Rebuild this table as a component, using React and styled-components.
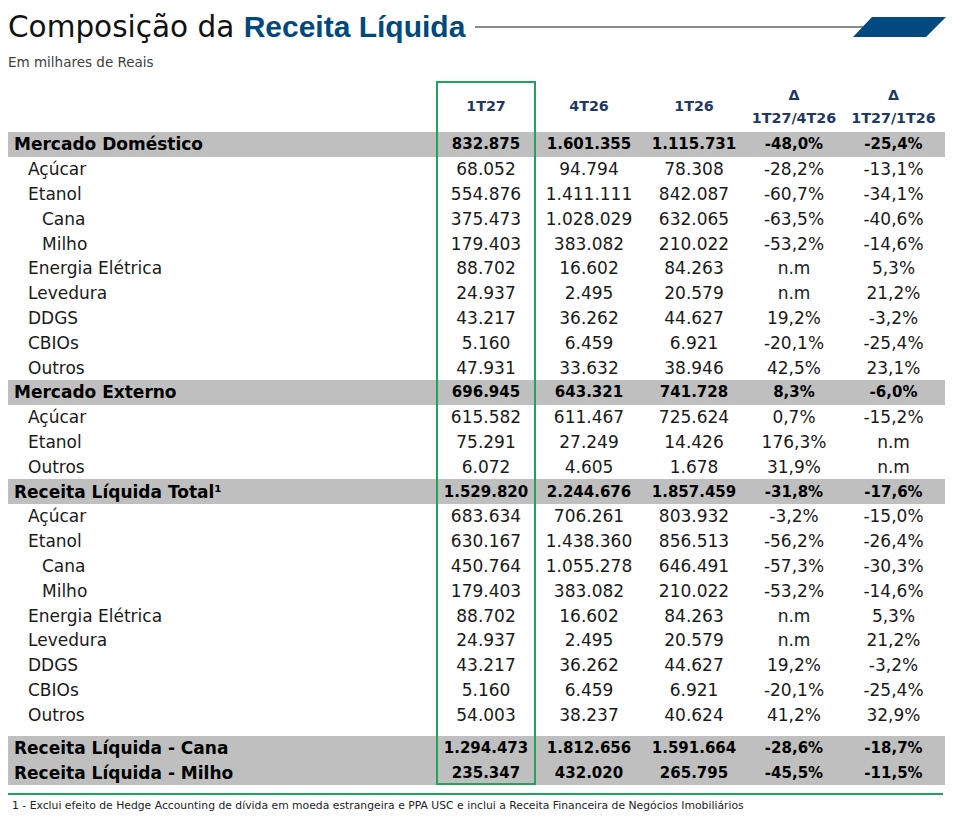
import React from 'react'
import styled, { createGlobalStyle } from 'styled-components'

const GlobalStyle = createGlobalStyle`
  body {
    margin: 0;
    background: #fff;
    font-family: "DejaVu Sans", sans-serif;
    color: #1a1a1a;
  }
`

const Page = styled.div`
  width: 955px;
  padding: 0 9px 0 8px;
  box-sizing: border-box;
`
const TitleRow = styled.div`
  display: flex;
  align-items: center;
  padding-top: 10px;
  height: 34px;
`
const Title = styled.h1`
  margin: 0;
  font-size: 29.5px;
  line-height: 34px;
  font-weight: 400;
  color: #111;
  white-space: nowrap;
`
const TitleStrong = styled.span`
  font-family: "Liberation Sans", Arial, sans-serif;
  font-weight: 700;
  font-size: 30px;
  color: #00497f;
`
const Rule = styled.div`
  flex: 1;
  height: 2px;
  background: #8a8a8a;
  margin-left: 10px;
  margin-right: -10px;
`
const Subtitle = styled.div`
  margin-top: 10px;
  font-size: 13.5px;
  line-height: 16px;
  color: #404040;
`
const Table = styled.div`
  position: relative;
  margin-top: 11px;
  width: 937px;
`
const Highlight = styled.div`
  position: absolute;
  left: 428px;
  top: 0;
  width: 100px;
  height: 704px;
  border: 2px solid #1ea45c;
  box-sizing: border-box;
  pointer-events: none;
  z-index: 2;
`
const Row = styled.div`
  display: grid;
  grid-template-columns: 428px 100px 106px 104px 96px 103px;
  align-items: center;
  height: ${(p) => p.$h || 24.8}px;
  background: ${(p) => (p.$band ? '#bfbfbf' : 'transparent')};
  font-weight: ${(p) => (p.$band ? 700 : 400)};
  color: ${(p) => (p.$band ? '#000' : '#1a1a1a')};
`
const HeadRow = styled(Row)`
  height: 51px;
`
const HeadCell = styled.div`
  text-align: center;
  font-size: 14.3px;
  font-weight: 700;
  line-height: 23px;
  color: #1f3864;
`
const Label = styled.div`
  font-size: 17px;
  padding-left: ${(p) => 6 + p.$level * 14}px;
  white-space: nowrap;
`
const Num = styled.div`
  text-align: center;
  font-size: ${(p) => (p.$bold ? 15 : 17)}px;
  white-space: nowrap;
`
const Gap = styled.div`
  height: 8.8px;
`
const FootRule = styled.div`
  margin-top: 8px;
  height: 2px;
  width: 935px;
  background: #1ea45c;
`
const Footnote = styled.div`
  margin-top: 4px;
  padding-left: 4px;
  font-size: 10.8px;
  line-height: 14px;
  color: #222;
  white-space: nowrap;
`

const body = [
  ['Mercado Doméstico', 0, true, ['832.875', '1.601.355', '1.115.731', '-48,0%', '-25,4%']],
  ['Açúcar', 1, false, ['68.052', '94.794', '78.308', '-28,2%', '-13,1%']],
  ['Etanol', 1, false, ['554.876', '1.411.111', '842.087', '-60,7%', '-34,1%']],
  ['Cana', 2, false, ['375.473', '1.028.029', '632.065', '-63,5%', '-40,6%']],
  ['Milho', 2, false, ['179.403', '383.082', '210.022', '-53,2%', '-14,6%']],
  ['Energia Elétrica', 1, false, ['88.702', '16.602', '84.263', 'n.m', '5,3%']],
  ['Levedura', 1, false, ['24.937', '2.495', '20.579', 'n.m', '21,2%']],
  ['DDGS', 1, false, ['43.217', '36.262', '44.627', '19,2%', '-3,2%']],
  ['CBIOs', 1, false, ['5.160', '6.459', '6.921', '-20,1%', '-25,4%']],
  ['Outros', 1, false, ['47.931', '33.632', '38.946', '42,5%', '23,1%']],
  ['Mercado Externo', 0, true, ['696.945', '643.321', '741.728', '8,3%', '-6,0%']],
  ['Açúcar', 1, false, ['615.582', '611.467', '725.624', '0,7%', '-15,2%']],
  ['Etanol', 1, false, ['75.291', '27.249', '14.426', '176,3%', 'n.m']],
  ['Outros', 1, false, ['6.072', '4.605', '1.678', '31,9%', 'n.m']],
  ['Receita Líquida Total¹', 0, true, ['1.529.820', '2.244.676', '1.857.459', '-31,8%', '-17,6%']],
  ['Açúcar', 1, false, ['683.634', '706.261', '803.932', '-3,2%', '-15,0%']],
  ['Etanol', 1, false, ['630.167', '1.438.360', '856.513', '-56,2%', '-26,4%']],
  ['Cana', 2, false, ['450.764', '1.055.278', '646.491', '-57,3%', '-30,3%']],
  ['Milho', 2, false, ['179.403', '383.082', '210.022', '-53,2%', '-14,6%']],
  ['Energia Elétrica', 1, false, ['88.702', '16.602', '84.263', 'n.m', '5,3%']],
  ['Levedura', 1, false, ['24.937', '2.495', '20.579', 'n.m', '21,2%']],
  ['DDGS', 1, false, ['43.217', '36.262', '44.627', '19,2%', '-3,2%']],
  ['CBIOs', 1, false, ['5.160', '6.459', '6.921', '-20,1%', '-25,4%']],
  ['Outros', 1, false, ['54.003', '38.237', '40.624', '41,2%', '32,9%']],
]

const totals = [
  ['Receita Líquida - Cana', ['1.294.473', '1.812.656', '1.591.664', '-28,6%', '-18,7%']],
  ['Receita Líquida - Milho', ['235.347', '432.020', '265.795', '-45,5%', '-11,5%']],
]

function DataRow({ label, level, band, values, h }) {
  return (
    <Row $band={band} $h={h}>
      <Label $level={level}>{label}</Label>
      {values.map((v, i) => (
        <Num key={i} $bold={band}>{v}</Num>
      ))}
    </Row>
  )
}

export default function App() {
  return (
    <Page>
      <GlobalStyle />
      <TitleRow>
        <Title>
          Composição da <TitleStrong>Receita Líquida</TitleStrong>
        </Title>
        <Rule />
        <svg width="93" height="20" viewBox="0 0 93 20" style={{ flexShrink: 0 }}>
          <polygon points="19,0 93,0 73,20 0,20" fill="#004a80" />
        </svg>
      </TitleRow>
      <Subtitle>Em milhares de Reais</Subtitle>
      <Table>
        <Highlight />
        <HeadRow>
          <div />
          <HeadCell>1T27</HeadCell>
          <HeadCell>4T26</HeadCell>
          <HeadCell>1T26</HeadCell>
          <HeadCell>
            Δ<br />1T27/4T26
          </HeadCell>
          <HeadCell>
            Δ<br />1T27/1T26
          </HeadCell>
        </HeadRow>
        {body.map(([label, level, band, values], i) => (
          <DataRow key={i} label={label} level={level} band={band} values={values} />
        ))}
        <Gap />
        {totals.map(([label, values], i) => (
          <DataRow key={i} label={label} level={0} band values={values} h={24.5} />
        ))}
      </Table>
      <FootRule />
      <Footnote>
        1 - Exclui efeito de Hedge Accounting de dívida em moeda estrangeira e PPA USC e inclui a Receita
        Financeira de Negócios Imobiliários
      </Footnote>
    </Page>
  )
}
